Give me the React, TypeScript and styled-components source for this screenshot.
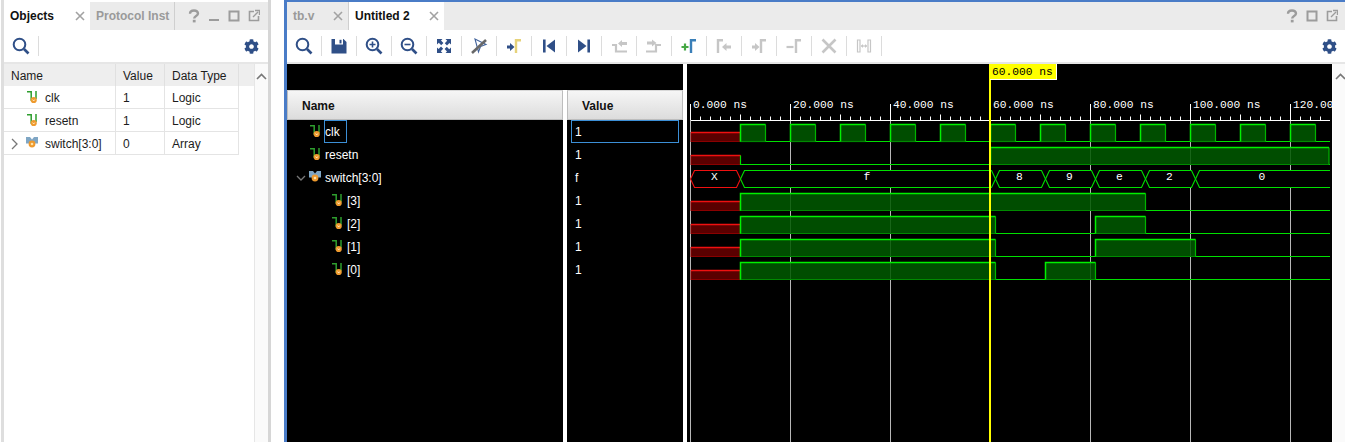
import React from 'react'
import styled, {createGlobalStyle} from 'styled-components'
import {FaCog} from 'react-icons/fa'

const NAVY = '#2f4f87'
const OFF = '#c6c6c6'

const GlobalStyle = createGlobalStyle`
	html, body {
		margin: 0;
		height: 442px;
		overflow: hidden;
		background: #fff;
		font-family: "Liberation Sans", Arial, sans-serif;
		font-size: 12px;
		color: #1c1c1c;
	}
`

const Page = styled.div`
	display: flex;
	height: 442px;
	width: 1345px;
	background: #fff;
`

const LeftPanel = styled.section`
	display: flex;
	flex-direction: column;
	width: 264px;
	margin-left: 1px;
	padding-top: 2px;
	border-left: 3px solid #dedede;
	border-right: 3px solid #d6d6d6;
`

const RightPanel = styled.section`
	display: flex;
	flex-direction: column;
	width: 1058px;
	margin-left: 13px;
	border-top: 2px solid #4a7cc7;
	border-left: 3px solid #4a7cc7;
`

const TabBar = styled.div`
	display: flex;
	flex: none;
	height: 28px;
	background: #ebebeb;
`

const Tab = styled.div<{$active?: boolean; $width: number; $divider?: boolean}>`
	display: flex;
	flex: none;
	align-items: center;
	justify-content: space-between;
	box-sizing: border-box;
	width: ${p => p.$width}px;
	padding: 0 5px 0 6px;
	font-weight: bold;
	white-space: nowrap;
	background: ${p => (p.$active ? '#fff' : 'transparent')};
	color: ${p => (p.$active ? '#111' : '#9a9a9a')};
	border-right: ${p => (p.$divider ? '1px solid #cfcfcf' : 'none')};
`

const WindowButtons = styled.div<{$pad: number}>`
	display: flex;
	margin-left: auto;
	padding-right: ${p => p.$pad}px;
`

const WindowButton = styled.div`
	display: flex;
	align-items: center;
	justify-content: center;
	width: 20px;
`

const Toolbar = styled.div`
	display: flex;
	flex: none;
	align-items: center;
	height: 32px;
	background: #fff;
	border-bottom: 2px solid #e6e6e6;
`

const ToolButton = styled.div<{$divider?: boolean}>`
	display: flex;
	align-items: center;
	justify-content: center;
	box-sizing: content-box;
	width: 34px;
	height: 20px;
	border-right: ${p => (p.$divider ? '1px solid #dcdcdc' : '1px solid transparent')};
`

const GearButton = styled.div<{$pad: number}>`
	display: flex;
	margin-left: auto;
	padding-right: ${p => p.$pad}px;
	color: ${NAVY};
`

const ObjectsBody = styled.div`
	display: flex;
	flex: 1;
	min-height: 0;
`

const ObjectsTable = styled.div`
	flex: 1;
`

const TableHeader = styled.div`
	display: grid;
	grid-template-columns: 112px 49px 74px 1fr;
	height: 22px;
	background: #eeeeee;
`

const HeaderCell = styled.div`
	display: flex;
	align-items: center;
	padding: 1px 0 0 7px;
	border-right: 1px solid #e0e0e0;
	&:last-child {
		border-right: none;
	}
`

const TableRow = styled.div`
	display: grid;
	grid-template-columns: 112px 49px 74px;
	width: 235px;
	height: 23px;
	box-sizing: border-box;
	border-bottom: 1px solid #e4e4e4;
	border-right: 1px solid #e4e4e4;
`

const TableCell = styled.div`
	display: flex;
	align-items: center;
	padding: 1px 0 0 7px;
	border-right: 1px solid #e4e4e4;
	&:last-child {
		border-right: none;
	}
`

const TreeCell = styled.div`
	display: flex;
	align-items: center;
	padding: 1px 0 0 23px;
	position: relative;
	border-right: 1px solid #e4e4e4;
`

const RowExpander = styled.svg`
	position: absolute;
	left: 7px;
	top: 6px;
`

const SignalName = styled.span`
	margin-left: 7px;
`

const ScrollStrip = styled.div<{$line: string}>`
	display: flex;
	flex: none;
	justify-content: center;
	box-sizing: border-box;
	width: 14px;
	padding-top: 5px;
	background: #fafafa;
	border-left: 1px solid ${p => p.$line};
`

const WaveBody = styled.div`
	display: flex;
	flex: 1;
	min-height: 0;
`

const ListArea = styled.div`
	display: flex;
	flex-direction: column;
	flex: none;
	width: 396px;
	margin-right: 4px;
`

const TopBand = styled.div`
	flex: none;
	height: 26px;
	background: #000;
`

const ListColumns = styled.div`
	display: flex;
	flex: 1;
	gap: 4px;
	min-height: 0;
`

const ListColumn = styled.div<{$width: number}>`
	display: flex;
	flex-direction: column;
	flex: none;
	width: ${p => p.$width}px;
	background: #000;
`

const ColumnHeader = styled.div`
	display: flex;
	flex: none;
	align-items: center;
	box-sizing: border-box;
	height: 30px;
	padding: 2px 0 0 14px;
	font-weight: bold;
	color: #111;
	background: linear-gradient(#f6f6f6, #dcdcdc);
	border: 1px solid #bdbdbd;
	border-top-color: #d8d8d8;
`

const NameRow = styled.div<{$depth: number}>`
	display: flex;
	align-items: center;
	position: relative;
	height: 23px;
	padding-left: ${p => 23 + p.$depth * 22}px;
	color: #fff;
`

const NameExpander = styled.svg`
	position: absolute;
	left: 9px;
	top: 9px;
`

const NameLabel = styled.span<{$selected?: boolean}>`
	display: flex;
	align-items: center;
	box-sizing: border-box;
	height: 23px;
	margin-left: 3px;
	padding: 0 1px;
	min-width: ${p => (p.$selected ? '23px' : '0')};
	box-shadow: ${p => (p.$selected ? 'inset 0 0 0 1px #3c8fd6' : 'none')};
`

const ValueRow = styled.div<{$selected?: boolean}>`
	display: flex;
	align-items: center;
	box-sizing: border-box;
	height: 23px;
	margin: 0 4px;
	padding-left: 4px;
	color: #fff;
	box-shadow: ${p => (p.$selected ? 'inset 0 0 0 1px #3c8fd6' : 'none')};
`

const WaveCanvas = styled.svg`
	display: block;
	flex: none;
	background: #000;
`

const WaveStrip = styled(ScrollStrip)`
	width: 13px;
	padding-left: 2px;
`

const RulerLabel = styled.text`
	font-family: "Liberation Mono", "Courier New", monospace;
	font-size: 11.25px;
	fill: #fff;
`

const BusLabel = styled(RulerLabel)`
	text-anchor: middle;
`

const MarkerLabel = styled(RulerLabel)`
	fill: #000;
`

const SignalGlyph = styled.svg`
	flex: none;
`

const BusGlyph = styled.svg`
	flex: none;
	margin-left: -1px;
`

const CloseIcon = () => (
	<svg width="10" height="10" viewBox="0 0 10 10">
		<path d="M1 1l8 8M9 1l-8 8" stroke="#a2a2a2" strokeWidth="1.6" fill="none" />
	</svg>
)

const HelpIcon = () => (
	<svg width="12" height="14" viewBox="0 0 12 14">
		<path d="M2 4.8C2 2.6 3.6 1.5 6 1.5s4 1 4 3c0 2.6-3.8 2.4-3.8 5" stroke="#9c9c9c" strokeWidth="2.4" fill="none" />
		<rect x="4.8" y="10.8" width="2.8" height="2.6" fill="#9c9c9c" />
	</svg>
)

const MinimizeIcon = () => (
	<svg width="12" height="14" viewBox="0 0 12 14">
		<rect x="1" y="10" width="10" height="2" fill="#9c9c9c" />
	</svg>
)

const MaximizeIcon = () => (
	<svg width="12" height="14" viewBox="0 0 12 14">
		<rect x="1.5" y="2.5" width="9" height="9" stroke="#9c9c9c" strokeWidth="2" fill="none" />
	</svg>
)

const FloatIcon = () => (
	<svg width="12" height="14" viewBox="0 0 12 14">
		<path d="M6 2.5H1.5v9h9V7" stroke="#9c9c9c" strokeWidth="1.6" fill="none" />
		<path d="M5 8l5-5M7 1.5h4.5V6" stroke="#9c9c9c" strokeWidth="1.4" fill="none" />
	</svg>
)

const ScrollUpIcon = () => (
	<svg width="11" height="7" viewBox="0 0 11 7">
		<path d="M1 6l4.5-4.5L10 6" stroke="#777" strokeWidth="1.6" fill="none" />
	</svg>
)

const SignalIcon = () => (
	<SignalGlyph width="11" height="15" viewBox="0 0 11 15">
		<path d="M0 1.8h4.2V10h2" stroke="#2e9e2e" strokeWidth="1.5" fill="none" />
		<path d="M9 1v8" stroke="#2e9e2e" strokeWidth="1.5" fill="none" />
		<circle cx="6.7" cy="10" r="3.1" fill="#ee9a2e" />
		<path d="M5.6 9.5l1.1 1.5 1.1-1.5" stroke="#fff4d8" strokeWidth=".8" fill="none" />
	</SignalGlyph>
)

const BusIcon = () => (
	<BusGlyph width="12" height="15" viewBox="0 0 12 15">
		<path d="M0 1h4l2 2.5L8 1h4v6.5H9L6 5 3 7.5H0z" fill="#7fa6c4" />
		<circle cx="6" cy="8" r="3.4" fill="#ee9a2e" />
		<circle cx="6" cy="8" r="1.3" fill="#ffe2a8" />
	</BusGlyph>
)

const Glyph = ({children}: {children: React.ReactNode}) => (
	<svg width="20" height="20" viewBox="0 0 20 20">
		{children}
	</svg>
)

const lens = (
	<>
		<circle cx="8.5" cy="8.5" r="5.8" stroke={NAVY} strokeWidth="2" fill="none" />
		<path d="M13 13l4.5 4.5" stroke={NAVY} strokeWidth="2.6" />
	</>
)

const fitArrow = 'M3 3h5.5L7 4.6l2.4 2.4-2.2 2.2L4.8 6.8 3 8.5z'
const edge = (colour: string) => <path d="M12 17V4.2h5" stroke={colour} strokeWidth="2.4" fill="none" />
const pushRight = (colour: string) => <path d="M3 9.5h3V7l4.5 4L6 15v-2.5H3z" fill={colour} />

const toolGlyphs: React.ReactNode[] = [
	lens,
	<>
		<path d="M2.5 3h12l3 3v11.5h-15z" fill={NAVY} />
		<rect x="6" y="3" width="8" height="5.5" fill="#fff" />
		<rect x="10.5" y="3.8" width="2" height="3.6" fill={NAVY} />
	</>,
	<>
		{lens}
		<path d="M5.5 8.5h6M8.5 5.5v6" stroke={NAVY} strokeWidth="1.6" />
	</>,
	<>
		{lens}
		<path d="M5.5 8.5h6" stroke={NAVY} strokeWidth="1.6" />
	</>,
	<>
		<path d={fitArrow} fill={NAVY} />
		<path d={fitArrow} fill={NAVY} transform="rotate(90 10 10)" />
		<path d={fitArrow} fill={NAVY} transform="rotate(180 10 10)" />
		<path d={fitArrow} fill={NAVY} transform="rotate(270 10 10)" />
	</>,
	<>
		<path d="M6 3l3.5 13 2-5.5 5.5-2z" stroke="#43649c" strokeWidth="1.1" fill="#fff" />
		<path d="M3 17L17 4" stroke="#686868" strokeWidth="2.6" />
	</>,
	<>
		{pushRight(NAVY)}
		{edge('#e6d27a')}
	</>,
	<>
		<rect x="4" y="3.5" width="2.6" height="13" fill={NAVY} />
		<path d="M16 3.5v13L7.5 10z" fill={NAVY} />
	</>,
	<>
		<rect x="13.4" y="3.5" width="2.6" height="13" fill={NAVY} />
		<path d="M4 3.5v13L12.5 10z" fill={NAVY} />
	</>,
	<>
		<path d="M3 9h4v6.5h11" stroke={OFF} strokeWidth="2.2" fill="none" />
		<path d="M9 7.5L13 4v2h5v3h-5v2z" fill={OFF} />
	</>,
	<>
		<path d="M2 15.5h10V9h5" stroke={OFF} strokeWidth="2.2" fill="none" />
		<path d="M3 5.5h5v-2L12.5 7 8 10.5v-2H3z" fill={OFF} />
	</>,
	<>
		<path d="M2.5 11h7M6 7.5v7" stroke="#45a845" strokeWidth="2.2" />
		{edge('#3a7fb8')}
	</>,
	<>
		<path d="M4 17V4.2h5" stroke={OFF} strokeWidth="2.4" fill="none" />
		<path d="M8 11l4.5-4v2.5H17v3h-4.5V15z" fill={OFF} />
	</>,
	<>
		{pushRight(OFF)}
		{edge(OFF)}
	</>,
	<>
		<path d="M2.5 11h7" stroke={OFF} strokeWidth="2.2" />
		{edge(OFF)}
	</>,
	<path d="M3.5 3.5l13 13M16.5 3.5l-13 13" stroke={OFF} strokeWidth="2.6" />,
	<>
		<path d="M3.5 4v12h2.5V4zM14 4v12h2.5V4z" fill="#fff" stroke={OFF} strokeWidth="1.2" />
		<path d="M7 10h6" stroke={OFF} strokeWidth="1.2" />
		<path d="M7 10l2-2v4zM13 10l-2-2v4z" fill={OFF} />
	</>,
]

const objects = [
	{name: 'clk', value: '1', type: 'Logic', bus: false},
	{name: 'resetn', value: '1', type: 'Logic', bus: false},
	{name: 'switch[3:0]', value: '0', type: 'Array', bus: true},
]

const waveRows = [
	{name: 'clk', value: '1', depth: 0, kind: 'bit'},
	{name: 'resetn', value: '1', depth: 0, kind: 'bit'},
	{name: 'switch[3:0]', value: 'f', depth: 0, kind: 'bus'},
	{name: '[3]', value: '1', depth: 1, kind: 'bit'},
	{name: '[2]', value: '1', depth: 1, kind: 'bit'},
	{name: '[1]', value: '1', depth: 1, kind: 'bit'},
	{name: '[0]', value: '1', depth: 1, kind: 'bit'},
]

const timeX = (ns: number): number => 690.5 + ns * 5
const END_NS = 127.9
const rowTop = (row: number): number => 124.5 + row * 23
const rowBottom = (row: number): number => 141.5 + row * 23

const clockPulses: [number, number][] = Array.from({length: 12}, (_, i) => [10 + i * 10, 15 + i * 10])

const bitTraces: {row: number; highs: [number, number][]}[] = [
	{row: 0, highs: clockPulses},
	{row: 1, highs: [[60, END_NS - 0.2]]},
	{row: 3, highs: [[10, 91]]},
	{row: 4, highs: [[10, 61], [81, 91]]},
	{row: 5, highs: [[10, 61], [81, 101]]},
	{row: 6, highs: [[10, 61], [71, 81]]},
]

const busSegments = [
	{from: 0, to: 10, label: 'X', colour: '#f01010'},
	{from: 10, to: 61, label: 'f', colour: '#00e000'},
	{from: 61, to: 71, label: '8', colour: '#00e000'},
	{from: 71, to: 81, label: '9', colour: '#00e000'},
	{from: 81, to: 91, label: 'e', colour: '#00e000'},
	{from: 91, to: 101, label: '2', colour: '#00e000'},
	{from: 101, to: END_NS, label: '0', colour: '#00e000'},
]

const rulerMarks = [0, 20, 40, 60, 80, 100, 120]

const BitTrace = ({row, highs}: {row: number; highs: [number, number][]}) => {
	const top = rowTop(row)
	const bottom = rowBottom(row)
	return (
		<g>
			<rect x={691} y={bottom - 9} width={49.5} height={9} fill="#5a0000" stroke="#8a0000" strokeWidth="1" />
			<path d={`M691 ${bottom - 9}H740.5`} stroke="#f01010" strokeWidth="1.4" />
			<path d={`M740.5 ${bottom - 9}V${bottom}H${timeX(END_NS)}`} stroke="#00e000" strokeWidth="1.2" fill="none" />
			{highs.map(([from, to]) => (
				<g key={from}>
					<rect x={timeX(from)} y={top} width={(to - from) * 5} height={17} fill="rgba(0, 88, 0, 0.87)" />
					<path d={`M${timeX(from)} ${bottom}H${timeX(to)}`} stroke="#008a00" strokeWidth="1.2" />
					<path d={`M${timeX(to)} ${top}V${bottom}`} stroke="#00b400" strokeWidth="1.2" />
					<path d={`M${timeX(from)} ${bottom}V${top}H${timeX(to)}`} stroke="#00f000" strokeWidth="1.5" fill="none" />
				</g>
			))}
		</g>
	)
}

const BusTrace = ({row}: {row: number}) => {
	const top = rowTop(row)
	const bottom = rowBottom(row)
	const mid = (top + bottom) / 2
	return (
		<g>
			{busSegments.map(({from, to, label, colour}) => {
				const x0 = timeX(from)
				const x1 = timeX(to)
				const open = to === END_NS
				const shape = open
					? `M${x1} ${top}H${x0 + 4}L${x0} ${mid}L${x0 + 4} ${bottom}H${x1}`
					: `M${x0} ${mid}L${x0 + 4} ${top}H${x1 - 4}L${x1} ${mid}L${x1 - 4} ${bottom}H${x0 + 4}Z`
				return (
					<g key={from}>
						<path d={shape} fill="#000" stroke={colour} strokeWidth="1.1" />
						<BusLabel x={open ? 1262 : (x0 + x1) / 2 - 1} y={mid + 1}>{label}</BusLabel>
					</g>
				)
			})}
		</g>
	)
}

const Waveform = () => {
	const ticks = Array.from({length: 64}, (_, i) => i * 2).filter(ns => ns % 20 !== 0)
	return (
		<WaveCanvas width="645" height="378" viewBox="687 64 645 378">
			{rulerMarks.map(ns => (
				<g key={ns}>
					<path d={`M${timeX(ns)} 120V442`} stroke="#b8b8b8" strokeWidth="1" />
					<path d={`M${timeX(ns)} 104V120`} stroke="#fff" strokeWidth="1" />
					<RulerLabel x={timeX(ns) + 2.5} y={107.5}>{ns}.000 ns</RulerLabel>
				</g>
			))}
			<path d="M691 120.5H1330" stroke="#fff" strokeWidth="1" />
			{ticks.map(ns => (
				<path key={ns} d={`M${timeX(ns)} ${ns % 10 === 0 ? 114.5 : 116.5}V120`} stroke="#fff" strokeWidth="1" />
			))}
			{bitTraces.map(trace => (
				<BitTrace key={trace.row} row={trace.row} highs={trace.highs} />
			))}
			<BusTrace row={2} />
			<path d="M990 64V442" stroke="#ffff00" strokeWidth="2" />
			<rect x="990" y="64" width="67" height="16" fill="#fff" />
			<rect x="990" y="64" width="66" height="15" fill="#ffff00" />
			<MarkerLabel x="992" y="74.5">60.000 ns</MarkerLabel>
		</WaveCanvas>
	)
}

const Chevron = ({down}: {down?: boolean}) =>
	down ? (
		<NameExpander width="10" height="6" viewBox="0 0 10 6">
			<path d="M1 1l4 4 4-4" stroke="#777" strokeWidth="1.3" fill="none" />
		</NameExpander>
	) : (
		<RowExpander width="8" height="12" viewBox="0 0 8 12">
			<path d="M1 1l5 5-5 5" stroke="#777" strokeWidth="1.3" fill="none" />
		</RowExpander>
	)

export default function App(): React.JSX.Element {
	return (
		<Page>
			<GlobalStyle />
			<LeftPanel>
				<TabBar>
					<Tab $active $width={86}>
						Objects
						<CloseIcon />
					</Tab>
					<Tab $width={85} $divider>Protocol Inst</Tab>
					<WindowButtons $pad={4}>
						<WindowButton><HelpIcon /></WindowButton>
						<WindowButton><MinimizeIcon /></WindowButton>
						<WindowButton><MaximizeIcon /></WindowButton>
						<WindowButton><FloatIcon /></WindowButton>
					</WindowButtons>
				</TabBar>
				<Toolbar>
					<ToolButton $divider>
						<Glyph>{lens}</Glyph>
					</ToolButton>
					<GearButton $pad={9}><FaCog size={15} /></GearButton>
				</Toolbar>
				<ObjectsBody>
					<ObjectsTable>
						<TableHeader>
							<HeaderCell>Name</HeaderCell>
							<HeaderCell>Value</HeaderCell>
							<HeaderCell>Data Type</HeaderCell>
							<HeaderCell />
						</TableHeader>
						{objects.map(item => (
							<TableRow key={item.name}>
								<TreeCell>
									{item.bus && <Chevron />}
									{item.bus ? <BusIcon /> : <SignalIcon />}
									<SignalName>{item.name}</SignalName>
								</TreeCell>
								<TableCell>{item.value}</TableCell>
								<TableCell>{item.type}</TableCell>
							</TableRow>
						))}
					</ObjectsTable>
					<ScrollStrip $line="#e6e6e6">
						<div><ScrollUpIcon /></div>
					</ScrollStrip>
				</ObjectsBody>
			</LeftPanel>
			<RightPanel>
				<TabBar>
					<Tab $width={62} $divider>
						tb.v
						<CloseIcon />
					</Tab>
					<Tab $active $width={95}>
						Untitled 2
						<CloseIcon />
					</Tab>
					<WindowButtons $pad={3}>
						<WindowButton><HelpIcon /></WindowButton>
						<WindowButton><MaximizeIcon /></WindowButton>
						<WindowButton><FloatIcon /></WindowButton>
					</WindowButtons>
				</TabBar>
				<Toolbar>
					{toolGlyphs.map((glyph, i) => (
						<ToolButton key={i} $divider>
							<Glyph>{glyph}</Glyph>
						</ToolButton>
					))}
					<GearButton $pad={8}><FaCog size={15} /></GearButton>
				</Toolbar>
				<WaveBody>
					<ListArea>
						<TopBand />
						<ListColumns>
							<ListColumn $width={276}>
								<ColumnHeader>Name</ColumnHeader>
								{waveRows.map((row, i) => (
									<NameRow key={row.name} $depth={row.depth}>
										{row.kind === 'bus' && <Chevron down />}
										{row.kind === 'bus' ? <BusIcon /> : <SignalIcon />}
										<NameLabel $selected={i === 0}>{row.name}</NameLabel>
									</NameRow>
								))}
							</ListColumn>
							<ListColumn $width={116}>
								<ColumnHeader>Value</ColumnHeader>
								{waveRows.map((row, i) => (
									<ValueRow key={row.name} $selected={i === 0}>{row.value}</ValueRow>
								))}
							</ListColumn>
						</ListColumns>
					</ListArea>
					<Waveform />
					<WaveStrip $line="#fff">
						<div><ScrollUpIcon /></div>
					</WaveStrip>
				</WaveBody>
			</RightPanel>
		</Page>
	)
}
